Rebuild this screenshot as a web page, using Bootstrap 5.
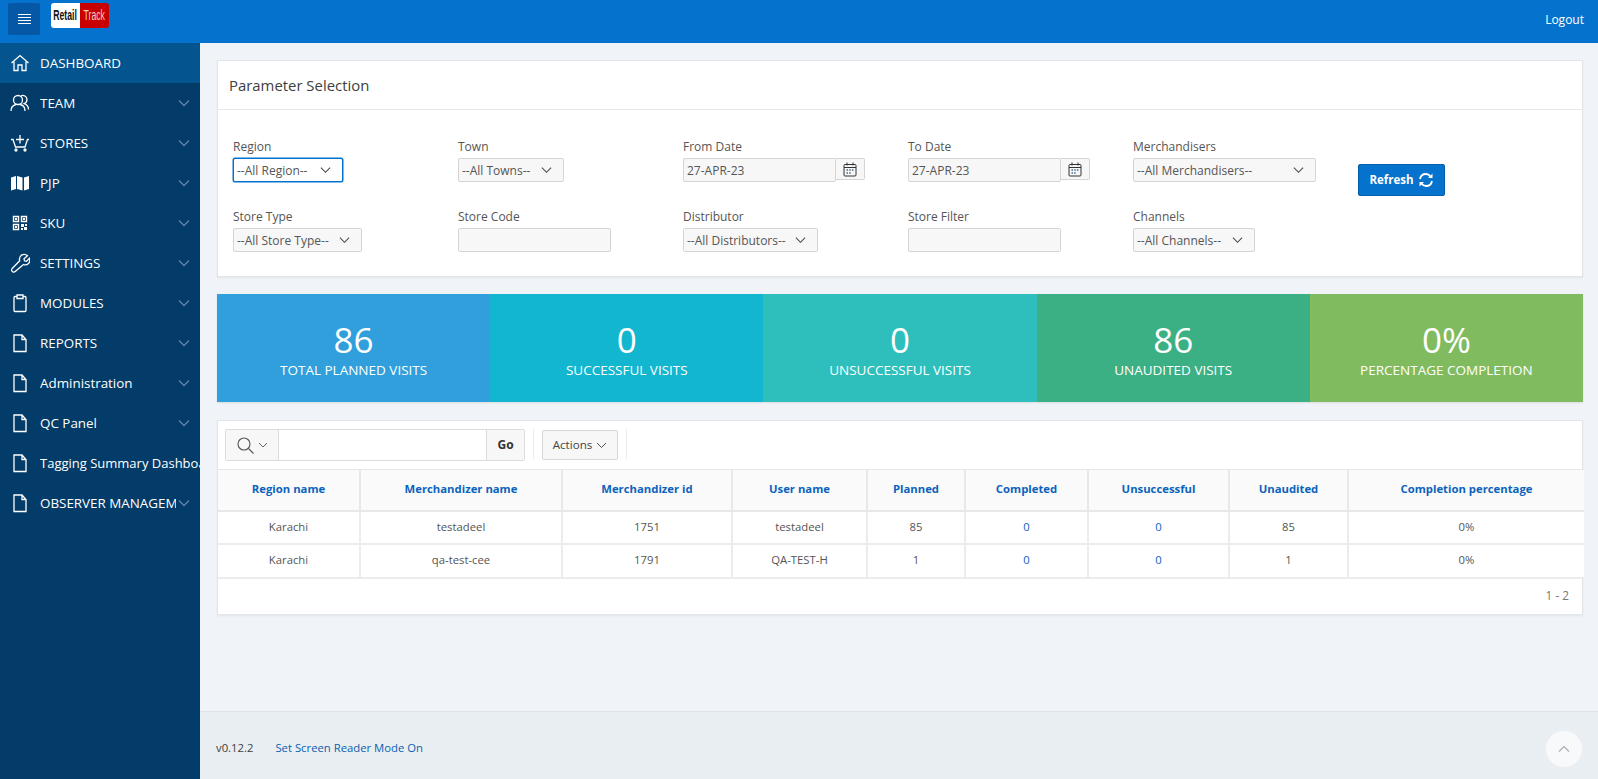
<!DOCTYPE html>
<html lang="en"><head><meta charset="utf-8"><title>Retail Track</title>
<link href="https://cdn.jsdelivr.net/npm/bootstrap@5.3.0/dist/css/bootstrap.min.css" rel="stylesheet">
<style>
html,body{height:100%;overflow:hidden}
body{font-family:"Open Sans","Liberation Sans",sans-serif;font-size:12px;color:#404040;background:#f0f4f8;height:779px}
.top-bar{height:43px;background:#0572ce;color:#fff}
.burger{width:32px;height:32px;background:#0558a5;border-radius:2px;margin-left:8px;margin-top:-5px}
.logo-box{margin-left:11px;height:25px;width:58px;margin-top:-12px;border-radius:3px;overflow:hidden;font-family:"Liberation Sans",sans-serif;font-size:14px}
.logo-w{width:29px;background:#fff;color:#111;font-weight:700}
.logo-r{width:29px;background:#c80000;color:#f4c9c9}
.logo-t{display:inline-block;transform:scaleX(.62)}
.logout{margin-right:14px;margin-top:-4px;font-size:12px;color:#fff;text-decoration:none}
.shell{height:736px}
.side-nav{width:200px;background:#033b69;flex:none;overflow:hidden}
.nav-line{height:40px;color:#fff;font-size:13.400px;white-space:nowrap;position:relative;text-decoration:none}
.nav-line.on{background:#04548f}
.nav-ico{width:20px;height:20px;margin-left:10px;margin-right:10px;flex:none}
.nav-txt{flex:none;overflow:hidden;padding-top:1px}
.nav-wide{font-size:13px}
.nav-cut{max-width:136px}
.nav-chev{position:absolute;left:178px;top:15px;width:12px;height:10px}
.main-col{min-width:0}
.main-pad{padding:17px 15px 0 17px}
.pane{background:#fff;border:1px solid #e3e6e9;box-shadow:0 1px 2px rgba(0,0,0,.06)}
.pane-head{height:49px;padding-left:11px;font-size:14.900px;border-bottom:1px solid #e8e8e8;color:#404040}
.param-grid{display:grid;grid-template-columns:repeat(5,225px) 1fr;grid-template-rows:46px 46px;row-gap:24px;padding:26px 15px 24px}
.fld-label{height:22px;line-height:22px;font-size:12px;color:#555;display:block;margin:0}
.ctl{height:24px;background:#f7f7f7;border:1px solid #d4d4d4;border-radius:2px;font-size:12px;color:#555;padding:0 3px;line-height:22px;font-family:inherit}
select.ctl{appearance:none;padding-top:1px;background-image:url("data:image/svg+xml,%3Csvg xmlns='http://www.w3.org/2000/svg' viewBox='0 0 12 8'%3E%3Cpath d='M1 1.500l5 5 5-5' fill='none' stroke='%23444' stroke-width='1.100'/%3E%3C/svg%3E");background-repeat:no-repeat;background-position:right 11px center;background-size:11px 8px;display:block}
select.ctl.focus-on{background-color:#fff;border-color:#0572ce;box-shadow:0 0 0 .5px #0572ce}
.w-reg{width:110px}.w-town{width:106px}.w-mer{width:183px}.w-st{width:129px}.w-dist{width:135px}.w-chan{width:122px}.w-txt{width:153px}
.date-btn{width:29px;height:22px;background:#f7f7f7;border:1px solid #d4d4d4;border-left:0;border-radius:0 2px 2px 0}
.refresh{width:87px;height:32px;margin-top:28px;background:#0572ce;border:1px solid #0460ad;color:#fff;font-weight:700;font-size:11.500px;border-radius:2px;padding:0}
.tile-row{height:108px;margin:17px 0 18px;box-shadow:0 1px 2px rgba(0,0,0,.1)}
.tile{flex:1 1 0;color:#fff;padding-top:26px;text-align:center}
.tile-num{font-size:35px;line-height:40px;height:40px}
.tile-lab{font-size:13.500px;line-height:20px}
.t1{background:#309fdb}.t2{background:#13b6cf}.t3{background:#2ebfbc}.t4{background:#3cb085}.t5{background:#81bb5f}
.tool-bar{height:48px;padding:8px 8px 0 7px}
.srch{width:300px;height:32px;border:1px solid #dcdcdc;border-radius:2px;background:#fff}
.srch-sel{width:53px;background:#f7f7f7;border-right:1px solid #dcdcdc}
.srch-go{width:38px;background:#f7f7f7;border-left:1px solid #dcdcdc;font-weight:700;font-size:12px;color:#333}
.tool-sep{width:1px;height:30px;background:#ececec;margin:0 8px}
.act-btn{width:76px;height:30px;margin-top:1px;background:#f7f7f7;border:1px solid #d8d8d8;border-radius:2px;font-size:11.600px;color:#444}
.rep-table{table-layout:fixed;width:1366px;border-collapse:collapse;margin:0;font-size:11.300px;text-align:center}
.rep-table th{height:41px;background:#fafafa;color:#0b63bd;font-weight:700;font-size:11.300px;border:2px solid #e8e8e8;padding:0;vertical-align:middle}
.rep-table td{height:33.500px;border:2px solid #ececec;padding:0;color:#555;vertical-align:middle;background:#fff}
.rep-table th:first-child,.rep-table td:first-child{border-left:0}
.rep-table th:last-child,.rep-table td:last-child{border-right:0}
.rep-table th{border-top:1px solid #e8e8e8}
.rep-table a{color:#0b63bd;text-decoration:none}
.pg-foot{height:35px;padding-right:13px;font-size:11.800px;color:#777}
.foot-bar{height:68px;background:#e9eef3;border-top:1px solid #dfe4e9;padding:6px 15px 0 16px;margin-top:auto;font-size:11.300px}
.foot-bar a{color:#0b5fb0;text-decoration:none;margin-left:22px}
.up-btn{width:38px;height:38px;border-radius:50%;background:#f8f9fb;border:1px solid #eef0f3}
</style></head><body class="d-flex flex-column">
<header class="top-bar d-flex align-items-center flex-none">
 <div class="burger d-flex align-items-center justify-content-center"><svg width="13" height="10" viewBox="0 0 13 10"><path d="M0 .5h13M0 3.500h13M0 6.500h13M0 9.500h13" stroke="#fff" stroke-width="1"/></svg></div>
 <div class="logo-box d-flex"><span class="logo-w d-flex align-items-center justify-content-center"><span class="logo-t">Retail</span></span><span class="logo-r d-flex align-items-center justify-content-center"><span class="logo-t">Track</span></span></div>
 <a class="logout ms-auto" href="#">Logout</a>
</header>
<div class="shell d-flex">
<nav class="side-nav">
 <a class="nav-line on d-flex align-items-center" href="#"><svg class="nav-ico" viewBox="0 0 20 20" fill="none" stroke="#fff" stroke-width="1.300"><path d="M1.500 10L10 2.500 18.500 10M4 8.500V17.500H8V12H12V17.500H16V8.500"/></svg><span class="nav-txt">DASHBOARD</span></a>
 <a class="nav-line d-flex align-items-center" href="#"><svg class="nav-ico" viewBox="0 0 20 20" fill="none" stroke="#fff" stroke-width="1.300"><circle cx="8" cy="7" r="4.500"/><path d="M1 18c0-4 3-6 5-6.500M10 11.500c3 .5 5 3 5 6.500M11 2.800c2.500-1 6 .3 6 3.700 0 2-1.200 3.500-2.800 4.200 2.300.8 4.300 3 4.300 5.800"/></svg><span class="nav-txt">TEAM</span><svg class="nav-chev" viewBox="0 0 12 10"><path d="M1 2.500l5 5 5-5" fill="none" stroke="#5e83a3" stroke-width="1.400"/></svg></a>
 <a class="nav-line d-flex align-items-center" href="#"><svg class="nav-ico" viewBox="0 0 20 20" fill="none" stroke="#fff" stroke-width="1.300"><path d="M1 6.500h2l2.500 7.500h9.500l2.500-7.500h1.500M10 2v8.500M6 6.500h8"/><circle cx="6" cy="17" r="1" fill="#fff"/><circle cx="15" cy="17" r="1" fill="#fff"/></svg><span class="nav-txt">STORES</span><svg class="nav-chev" viewBox="0 0 12 10"><path d="M1 2.500l5 5 5-5" fill="none" stroke="#5e83a3" stroke-width="1.400"/></svg></a>
 <a class="nav-line d-flex align-items-center" href="#"><svg class="nav-ico" viewBox="0 0 20 20" fill="#fff"><path d="M1 4.500l5-1.500v13l-5 1.500zM7 3l5.500 1.500v13L7 16zM14 4.500L19 3v13l-5 1.500z"/></svg><span class="nav-txt">PJP</span><svg class="nav-chev" viewBox="0 0 12 10"><path d="M1 2.500l5 5 5-5" fill="none" stroke="#5e83a3" stroke-width="1.400"/></svg></a>
 <a class="nav-line d-flex align-items-center" href="#"><svg class="nav-ico" viewBox="0 0 20 20" fill="none" stroke="#fff" stroke-width="1.400"><path d="M3.500 3.500h5v5h-5zM11.500 3.500h5v5h-5zM3.500 11.500h5v5h-5z"/><path fill="#fff" stroke="none" d="M5 5h2v2H5zM13 5h2v2h-2zM5 13h2v2H5zM11 11h3v3h-3zM15 11h2v2h-2zM14 14h3v3h-3zM11 15h2v2h-2z"/></svg><span class="nav-txt">SKU</span><svg class="nav-chev" viewBox="0 0 12 10"><path d="M1 2.500l5 5 5-5" fill="none" stroke="#5e83a3" stroke-width="1.400"/></svg></a>
 <a class="nav-line d-flex align-items-center" href="#"><svg class="nav-ico" viewBox="0 0 20 20" fill="none" stroke="#fff" stroke-width="1.300"><path d="M12 1.800c2-.7 4.200-.3 5.500 1l-3.500 3 .5 2 2 .5 3-3c.6 2 .2 4-1 5.200-1.400 1.400-3.500 1.700-5 1L5.500 18.300c-1 1-2.500 1-3.300.1-.9-.9-.8-2.300.2-3.200L9.700 7.800c-.6-2-.1-4.500 2.300-6z"/></svg><span class="nav-txt">SETTINGS</span><svg class="nav-chev" viewBox="0 0 12 10"><path d="M1 2.500l5 5 5-5" fill="none" stroke="#5e83a3" stroke-width="1.400"/></svg></a>
 <a class="nav-line d-flex align-items-center" href="#"><svg class="nav-ico" viewBox="0 0 20 20" fill="none" stroke="#fff" stroke-width="1.300"><path d="M7 3.500H5a1 1 0 0 0-1 1v13a1 1 0 0 0 1 1h10a1 1 0 0 0 1-1v-13a1 1 0 0 0-1-1h-2"/><path d="M7 2h6v3.500H7z"/></svg><span class="nav-txt">MODULES</span><svg class="nav-chev" viewBox="0 0 12 10"><path d="M1 2.500l5 5 5-5" fill="none" stroke="#5e83a3" stroke-width="1.400"/></svg></a>
 <a class="nav-line d-flex align-items-center" href="#"><svg class="nav-ico" viewBox="0 0 20 20" fill="none" stroke="#fff" stroke-width="1.300"><path d="M4 2h8l4 4.500v12H4zM12 2v4.500h4"/></svg><span class="nav-txt">REPORTS</span><svg class="nav-chev" viewBox="0 0 12 10"><path d="M1 2.500l5 5 5-5" fill="none" stroke="#5e83a3" stroke-width="1.400"/></svg></a>
 <a class="nav-line d-flex align-items-center" href="#"><svg class="nav-ico" viewBox="0 0 20 20" fill="none" stroke="#fff" stroke-width="1.300"><path d="M4 2h8l4 4.500v12H4zM12 2v4.500h4"/></svg><span class="nav-txt">Administration</span><svg class="nav-chev" viewBox="0 0 12 10"><path d="M1 2.500l5 5 5-5" fill="none" stroke="#5e83a3" stroke-width="1.400"/></svg></a>
 <a class="nav-line d-flex align-items-center" href="#"><svg class="nav-ico" viewBox="0 0 20 20" fill="none" stroke="#fff" stroke-width="1.300"><path d="M4 2h8l4 4.500v12H4zM12 2v4.500h4"/></svg><span class="nav-txt">QC Panel</span><svg class="nav-chev" viewBox="0 0 12 10"><path d="M1 2.500l5 5 5-5" fill="none" stroke="#5e83a3" stroke-width="1.400"/></svg></a>
 <a class="nav-line d-flex align-items-center" href="#"><svg class="nav-ico" viewBox="0 0 20 20" fill="none" stroke="#fff" stroke-width="1.300"><path d="M4 2h8l4 4.500v12H4zM12 2v4.500h4"/></svg><span class="nav-txt nav-wide">Tagging Summary Dashboard</span></a>
 <a class="nav-line d-flex align-items-center" href="#"><svg class="nav-ico" viewBox="0 0 20 20" fill="none" stroke="#fff" stroke-width="1.300"><path d="M4 2h8l4 4.500v12H4zM12 2v4.500h4"/></svg><span class="nav-txt nav-cut">OBSERVER MANAGEMENT</span><svg class="nav-chev" viewBox="0 0 12 10"><path d="M1 2.500l5 5 5-5" fill="none" stroke="#5e83a3" stroke-width="1.400"/></svg></a>
</nav>
<div class="main-col flex-grow-1 d-flex flex-column">
 <main class="main-pad">
  <section class="pane">
   <div class="pane-head d-flex align-items-center">Parameter Selection</div>
   <div class="param-grid">
    <div><label class="fld-label">Region</label><select class="ctl focus-on w-reg"><option>--All Region--</option></select></div>
    <div><label class="fld-label">Town</label><select class="ctl w-town"><option>--All Towns--</option></select></div>
    <div><label class="fld-label">From Date</label><div class="d-flex"><input class="ctl w-txt" value="27-APR-23"><span class="date-btn d-flex align-items-center justify-content-center"><svg width="14" height="15" viewBox="0 0 14 15" fill="none" stroke="#333"><rect x="1" y="2.500" width="12" height="11.500" rx="1"/><path d="M1 5.500h12M4 .5v3M10 .5v3"/><path stroke="#4a6a8a" stroke-width="1.300" stroke-dasharray="1.500 1.200" d="M3.500 8h7.500M3.500 11h5"/></svg></span></div></div>
    <div><label class="fld-label">To Date</label><div class="d-flex"><input class="ctl w-txt" value="27-APR-23"><span class="date-btn d-flex align-items-center justify-content-center"><svg width="14" height="15" viewBox="0 0 14 15" fill="none" stroke="#333"><rect x="1" y="2.500" width="12" height="11.500" rx="1"/><path d="M1 5.500h12M4 .5v3M10 .5v3"/><path stroke="#4a6a8a" stroke-width="1.300" stroke-dasharray="1.500 1.200" d="M3.500 8h7.500M3.500 11h5"/></svg></span></div></div>
    <div><label class="fld-label">Merchandisers</label><select class="ctl w-mer"><option>--All Merchandisers--</option></select></div>
    <div><button class="refresh d-flex align-items-center justify-content-center gap-1" type="button">Refresh <svg width="16" height="16" viewBox="0 0 16 16" fill="none" stroke="#fff" stroke-width="1.800"><path d="M2 7c.5-3 3-5 6-5 2 0 3.500 1 4.500 2.500M14 9c-.5 3-3 5-6 5-2 0-3.500-1-4.500-2.500"/><path fill="#fff" stroke="none" d="M14.500 1.500v4.500h-4.500zM1.500 14.500V10h4.500z"/></svg></button></div>
    <div><label class="fld-label">Store Type</label><select class="ctl w-st"><option>--All Store Type--</option></select></div>
    <div><label class="fld-label">Store Code</label><input class="ctl w-txt"></div>
    <div><label class="fld-label">Distributor</label><select class="ctl w-dist"><option>--All Distributors--</option></select></div>
    <div><label class="fld-label">Store Filter</label><input class="ctl w-txt"></div>
    <div><label class="fld-label">Channels</label><select class="ctl w-chan"><option>--All Channels--</option></select></div>
   </div>
  </section>
  <section class="tile-row d-flex">
   <div class="tile t1"><div class="tile-num">86</div><div class="tile-lab">TOTAL PLANNED VISITS</div></div>
   <div class="tile t2"><div class="tile-num">0</div><div class="tile-lab">SUCCESSFUL VISITS</div></div>
   <div class="tile t3"><div class="tile-num">0</div><div class="tile-lab">UNSUCCESSFUL VISITS</div></div>
   <div class="tile t4"><div class="tile-num">86</div><div class="tile-lab">UNAUDITED VISITS</div></div>
   <div class="tile t5"><div class="tile-num">0%</div><div class="tile-lab">PERCENTAGE COMPLETION</div></div>
  </section>
  <section class="pane">
   <div class="tool-bar d-flex align-items-start">
    <div class="srch d-flex">
     <span class="srch-sel d-flex align-items-center justify-content-center gap-1"><svg width="17" height="17" viewBox="0 0 17 17" fill="none" stroke="#555" stroke-width="1.100"><circle cx="7" cy="7" r="6"/><path d="M11.500 11.500l5 5"/></svg><svg width="10" height="7" viewBox="0 0 10 7" fill="none" stroke="#666"><path d="M1 1l4 4 4-4"/></svg></span>
     <span class="flex-grow-1"></span>
     <span class="srch-go d-flex align-items-center justify-content-center">Go</span>
    </div>
    <span class="tool-sep"></span>
    <span class="act-btn d-flex align-items-center justify-content-center gap-1">Actions <svg width="11" height="7" viewBox="0 0 11 7" fill="none" stroke="#555"><path d="M1 1l4.500 4.500L10 1"/></svg></span>
    <span class="tool-sep"></span>
   </div>
   <table class="rep-table">
    <colgroup><col style="width:142px"><col style="width:202px"><col style="width:170px"><col style="width:135px"><col style="width:98px"><col style="width:123px"><col style="width:141px"><col style="width:119px"><col style="width:236px"></colgroup>
    <thead><tr><th>Region name</th><th>Merchandizer name</th><th>Merchandizer id</th><th>User name</th><th>Planned</th><th>Completed</th><th>Unsuccessful</th><th>Unaudited</th><th>Completion percentage</th></tr></thead>
    <tbody>
     <tr><td>Karachi</td><td>testadeel</td><td>1751</td><td>testadeel</td><td>85</td><td><a href="#">0</a></td><td><a href="#">0</a></td><td>85</td><td>0%</td></tr>
     <tr><td>Karachi</td><td>qa-test-cee</td><td>1791</td><td>QA-TEST-H</td><td>1</td><td><a href="#">0</a></td><td><a href="#">0</a></td><td>1</td><td>0%</td></tr>
    </tbody>
   </table>
   <div class="pg-foot d-flex align-items-center justify-content-end">1 - 2</div>
  </section>
 </main>
 <footer class="foot-bar d-flex align-items-center"><span>v0.12.2</span><a href="#">Set Screen Reader Mode On</a>
  <span class="up-btn ms-auto d-flex align-items-center justify-content-center"><svg width="12" height="8" viewBox="0 0 12 8" fill="none" stroke="#a8adb3" stroke-width="1.200"><path d="M1 6.500l5-5 5 5"/></svg></span>
 </footer>
</div>
</div>
<script src="https://cdn.jsdelivr.net/npm/bootstrap@5.3.0/dist/js/bootstrap.bundle.min.js"></script>
</body></html>
